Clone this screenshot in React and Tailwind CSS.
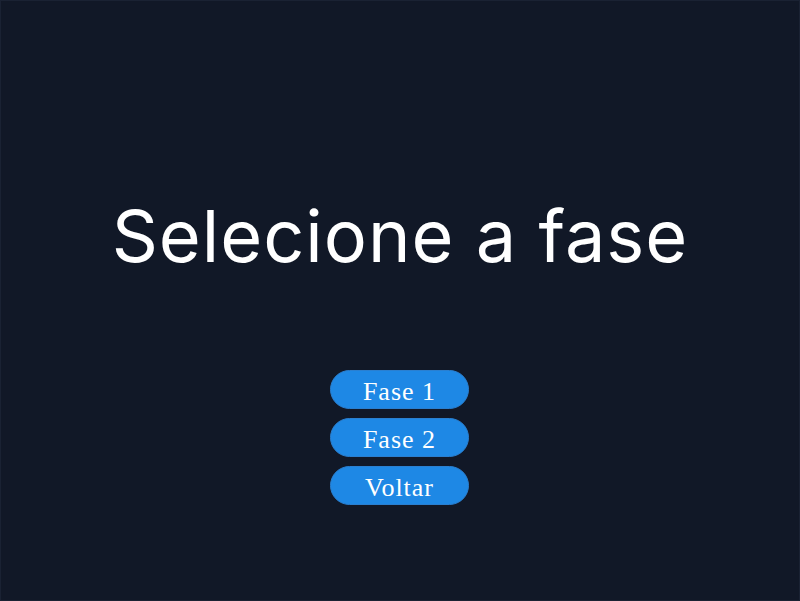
export default function App() {
  return (
    <div className="w-[800px] h-[601px] bg-[#111827] flex flex-col items-center border border-[#1a2233]">
      <h1 className="mt-[190px] text-[72px] leading-[90px] text-white font-normal tracking-[1px]" style={{ fontFamily: 'Inter, "Liberation Sans", Arial, sans-serif' }}>
        Selecione a fase
      </h1>
      <div className="mt-[89px] flex flex-col gap-[9px] -ml-[1px]">
        {["Fase 1", "Fase 2", "Voltar"].map((t) => (
          <button
            key={t}
            className="w-[139px] h-[39px] pt-[4px] rounded-full bg-[#1e88e5] border border-[#2a7fd0] text-white text-[26px] leading-none flex items-center justify-center tracking-[1px]"
            style={{ fontFamily: '"Liberation Serif", "Times New Roman", serif' }}
          >
            {t}
          </button>
        ))}
      </div>
    </div>
  );
}
